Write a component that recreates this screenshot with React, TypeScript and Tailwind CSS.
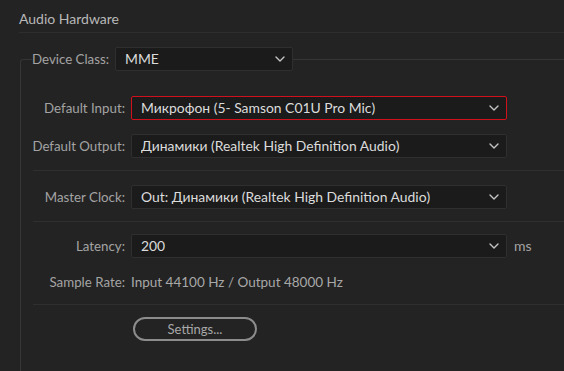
import React from "react";

const Chevron = () => (
  <svg width="10" height="6" viewBox="0 0 10 6" className="shrink-0">
    <path d="M1 1 L5 5 L9 1" fill="none" stroke="#c4c4c4" strokeWidth="1.4" strokeLinecap="round" strokeLinejoin="round" />
  </svg>
);

const Select = ({ value, w, red }: { value: string; w: string; red?: boolean }) => (
  <div
    className={`${w} h-[24px] flex items-center justify-between pl-[9px] pr-[7px] rounded-[2px] bg-[#1b1b1b] text-[#dcdcdc] text-[13.9px] ${
      red ? "border-[1.5px] border-[#d0101c]" : "border border-[#2f2f2f]"
    }`}
  >
    <span className="truncate">{value}</span>
    <Chevron />
  </div>
);

const Label = ({ children }: { children: React.ReactNode }) => (
  <div className="w-[104px] text-right text-[#a3a3a3] text-[13.3px] shrink-0">{children}</div>
);

export default function App() {
  return (
    <div
      className="w-[564px] h-[371px] bg-[#232323] overflow-hidden text-[14px] leading-[20px]"
      style={{ fontFamily: "Lato, 'Liberation Sans', sans-serif" }}
    >
      <div className="ml-[19px] h-[33px] pt-[9px] border-b border-[#2e2e2e] text-[#b8b8b8]">Audio Hardware</div>
      <fieldset className="ml-[20px] mt-[14px] border-l border-t border-[#353535] rounded-tl-[3px] pb-[40px]">
        <legend className="ml-[11px] flex items-center">
          <span className="text-[#a3a3a3] text-[13.3px] mr-[6px]">Device Class:</span>
          <Select value="MME" w="w-[178px]" />
        </legend>
        <div className="mt-[25px] flex items-center">
          <Label>Default Input:</Label>
          <div className="ml-[6px]">
            <Select value="Микрофон (5- Samson C01U Pro Mic)" w="w-[376px]" red />
          </div>
        </div>
        <div className="mt-[14px] flex items-center">
          <Label>Default Output:</Label>
          <div className="ml-[6px]">
            <Select value="Динамики (Realtek High Definition Audio)" w="w-[376px]" />
          </div>
        </div>
        <div className="ml-[12px] mt-[12px] border-t border-[#2f2f2f]" />
        <div className="mt-[14px] flex items-center">
          <Label>Master Clock:</Label>
          <div className="ml-[6px]">
            <Select value="Out: Динамики (Realtek High Definition Audio)" w="w-[376px]" />
          </div>
        </div>
        <div className="ml-[12px] mt-[12px] border-t border-[#2f2f2f]" />
        <div className="mt-[12px] flex items-center">
          <Label>Latency:</Label>
          <div className="ml-[6px]">
            <Select value="200" w="w-[376px]" />
          </div>
          <span className="ml-[7px] text-[#a3a3a3]">ms</span>
        </div>
        <div className="mt-[14px] flex items-center">
          <Label>Sample Rate:</Label>
          <span className="ml-[6px] text-[#a8a8a8] text-[13.5px]">Input 44100 Hz / Output 48000 Hz</span>
        </div>
        <div className="ml-[12px] mt-[12px] border-t border-[#2f2f2f]" />
        <div className="mt-[12px] ml-[112px]">
          <div className="w-[124px] h-[24px] rounded-full border-2 border-[#8c8c8c] flex items-center justify-center text-[13px] text-[#a8a8a8]">
            Settings...
          </div>
        </div>
      </fieldset>
    </div>
  );
}
